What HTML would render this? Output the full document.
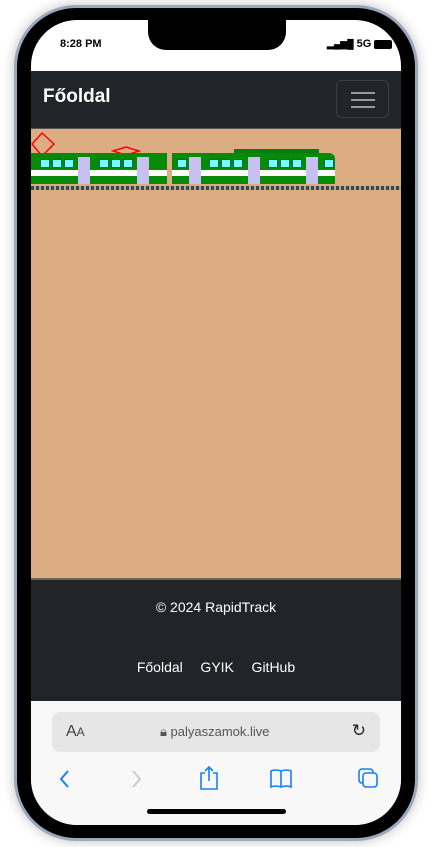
<!DOCTYPE html>
<html><head><meta charset="utf-8"><style>
*{margin:0;padding:0;box-sizing:border-box}
body{width:430px;height:847px;background:#fff;position:relative;overflow:hidden;font-family:"Liberation Sans",sans-serif}
.frame{position:absolute;left:14px;top:5px;width:404px;height:836px;border-radius:62px;background:#000;border:3px solid #9aa8bc;box-shadow:0 0 12px rgba(0,0,0,.25)}
.screen{position:absolute;left:31px;top:20px;width:370px;height:805px;border-radius:46px;background:#fff;overflow:hidden}
.notch{position:absolute;left:117px;top:0;width:138px;height:30px;background:#000;border-radius:0 0 18px 18px}
.status{position:absolute;top:18px;font-size:11px;font-weight:bold}
.nav{position:absolute;left:0;top:51px;width:370px;height:57px;background:#212529}
.brand{position:absolute;left:12px;top:15px;color:#fff;font-size:19px;font-weight:bold}
.tog{position:absolute;right:12px;top:9px;width:53px;height:38px;border:1px solid #3b3f44;border-radius:6px}
.tog i{position:absolute;left:14px;width:24px;height:2px;background:#999}
.content{position:absolute;left:0;top:108px;width:370px;height:450px;background:#dcad83;border-top:1px solid #555}
.footer{position:absolute;left:0;top:558px;width:370px;height:123px;background:#212529;border-top:2px solid #666;color:#fff;font-size:14px;text-align:center}
.bbar{position:absolute;left:0;top:681px;width:370px;height:124px;background:#f8f8f8}
.url{position:absolute;left:21px;top:11px;width:328px;height:40px;background:#e6e6e6;border-radius:8px;font-size:13px;color:#555}
.car{position:absolute;background:#078a07;height:31px}
.stripe{position:absolute;left:0;right:0;top:17px;height:6px;background:#fff}
.w{position:absolute;top:6px;width:10px;height:9px;background:#7ff;border:1px solid #066}
.d{position:absolute;top:4px;width:12px;height:27px;background:#c8c0f0}
</style></head><body>
<div class="frame"></div>
<div class="screen">
<div class="notch"></div>
<div class="status" style="left:29px">8:28 PM</div>
<div class="status" style="left:296px;display:flex;align-items:center;gap:3px"><span style="font-size:9px">▂▄▆█</span>5G<span style="display:inline-block;width:18px;height:9px;background:#000;border-radius:2px"></span></div>
<div class="nav"><div class="brand">Főoldal</div><div class="tog"><i style="top:11px"></i><i style="top:18px"></i><i style="top:25px"></i></div></div>
<div class="content">
 <svg width="50" height="40" style="position:absolute;left:0;top:2px"><path d="M1 13 L11 2 L23 13 L11 25 Z" fill="none" stroke="red" stroke-width="1.5"/><path d="M0 25 H135" stroke="red" stroke-width="1.5"/></svg>
 <svg width="60" height="20" style="position:absolute;left:80px;top:12px"><path d="M2 10 L15 6 L28 10 L15 14 Z" fill="none" stroke="red" stroke-width="1.5"/></svg>
 <div class="car" style="left:0;top:24px;width:136px"><div class="stripe"></div>
 <div class="w" style="left:9px"></div><div class="w" style="left:21px"></div><div class="w" style="left:33px"></div><div class="d" style="left:47px"></div><div class="w" style="left:68px"></div><div class="w" style="left:80px"></div><div class="w" style="left:92px"></div><div class="d" style="left:106px"></div></div>
 <div class="car" style="left:141px;top:24px;width:163px;border-radius:0 6px 0 0"><div class="stripe"></div>
 <div class="w" style="left:5px"></div><div class="d" style="left:17px"></div><div class="w" style="left:37px"></div><div class="w" style="left:49px"></div><div class="w" style="left:61px"></div><div class="d" style="left:76px"></div><div class="w" style="left:96px"></div><div class="w" style="left:108px"></div><div class="w" style="left:120px"></div><div class="d" style="left:134px"></div><div class="w" style="left:152px;background:#7ff"></div></div>
 <div style="position:absolute;left:203px;top:20px;width:85px;height:4px;background:#0a7a0a"></div>
 <div style="position:absolute;left:0;top:57px;width:370px;height:4px;background:repeating-linear-gradient(90deg,#444 0 3px,#aa9 3px 5px)"></div>
</div>
<div class="footer"><div style="margin-top:19px">© 2024 RapidTrack</div><div style="margin-top:44px;word-spacing:2px">Főoldal&nbsp;&nbsp;&nbsp;GYIK&nbsp;&nbsp;&nbsp;GitHub</div></div>
<div class="bbar">
 <div class="url"><span style="position:absolute;left:14px;top:11px;font-size:16px;color:#444">A<span style="font-size:12px">A</span></span><span style="position:absolute;left:108px;top:12px">🔒︎ palyaszamok.live</span><span style="position:absolute;right:14px;top:9px;font-size:17px;color:#222">↻</span></div>
 <svg width="370" height="40" style="position:absolute;left:0;top:62px" fill="none" stroke-width="2">
  <path d="M37 8 L30 16 L37 24" stroke="#1a7ef0"/>
  <path d="M102 8 L109 16 L102 24" stroke="#ccc"/>
  <path d="M174 10 h-4 v16 h16 v-16 h-4 M178 4 v14 M174 8 l4 -4 l4 4" stroke="#1a7ef0" stroke-width="1.6"/>
  <path d="M250 8 q-6 -2 -10 0 v16 q4 -2 10 0 q6 -2 10 0 v-16 q-4 -2 -10 0 v16" stroke="#1a7ef0" stroke-width="1.6"/>
  <rect x="328" y="6" width="14" height="14" rx="3" stroke="#1a7ef0" stroke-width="1.6"/><rect x="332" y="10" width="14" height="14" rx="3" stroke="#1a7ef0" fill="#f8f8f8" stroke-width="1.6"/>
 </svg>
 <div style="position:absolute;left:116px;top:108px;width:139px;height:5px;background:#000;border-radius:3px"></div>
</div>
</div>
</body></html>
